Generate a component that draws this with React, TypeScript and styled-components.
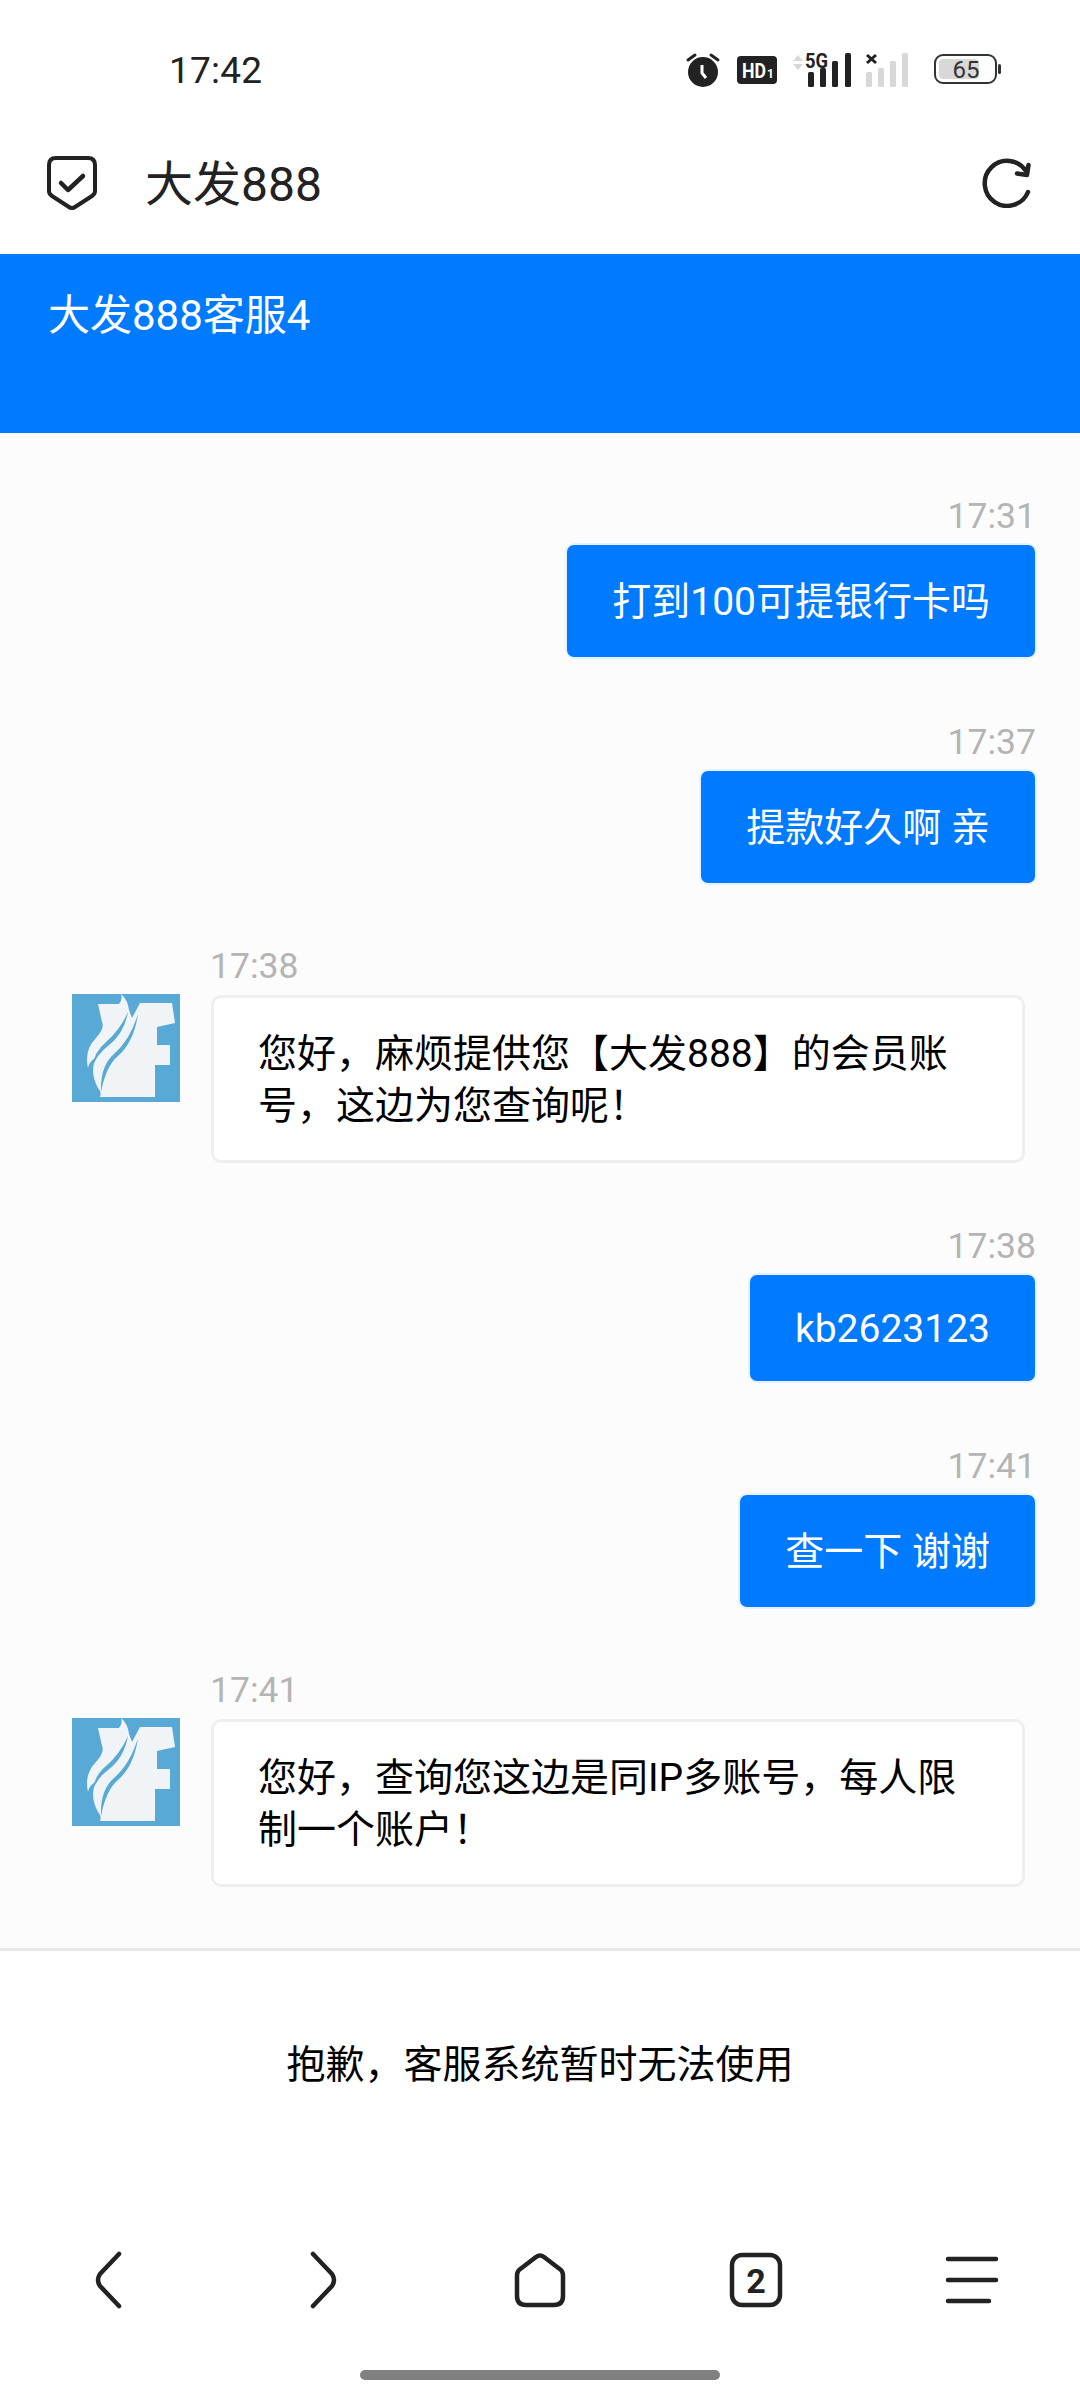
import React from "react";
import styled, { createGlobalStyle } from "styled-components";

const Global = createGlobalStyle`
  html, body { margin: 0; padding: 0; background: #fff; }
  * { box-sizing: border-box; }
  body { font-family: Roboto, "Noto Sans CJK SC", sans-serif; }
`;

const Page = styled.div`
  width: 1080px;
  height: 2400px;
  display: flex;
  flex-direction: column;
  overflow: hidden;
  background: #fff;
`;

const StatusBar = styled.div`
  height: 130px;
  flex: none;
  padding: 10px 78px 0 169px;
  display: flex;
  align-items: center;
  justify-content: space-between;
`;
const Clock = styled.div`
  font-size: 37px;
  color: #222;
  letter-spacing: 0.2px;
`;
const StatusIcons = styled.div`
  display: flex;
  align-items: center;
`;
const Icon = styled.svg<{ $ml?: number }>`
  display: block;
  flex: none;
  margin-left: ${(p) => p.$ml ?? 0}px;
`;

const Header = styled.div`
  height: 124px;
  flex: none;
  padding: 0 48px 18px 47px;
  display: flex;
  align-items: center;
`;
const Title = styled.div`
  flex: 1;
  margin: 0 0 6px 48px;
  font-size: 48px;
  color: #222;
`;

const Banner = styled.div`
  height: 179px;
  flex: none;
  background: #007aff;
  color: #fff;
  font-size: 42px;
  line-height: 50px;
  padding: 37px 48px 0;
`;

const Chat = styled.div`
  height: 1518px;
  flex: none;
  background: #fcfcfc;
  border-bottom: 3px solid #e8e8e8;
  padding-top: 60px;
  display: flex;
  flex-direction: column;
  gap: 60px;
`;

const RightBlock = styled.div`
  padding-right: 45px;
  display: flex;
  flex-direction: column;
  align-items: flex-end;
  & + & {
    margin-top: 2px;
  }
`;
const LeftBlock = styled.div`
  padding-left: 72px;
  display: flex;
  gap: 31px;
  align-items: flex-start;
`;
const LeftColumn = styled.div`
  display: flex;
  flex-direction: column;
  align-items: flex-start;
`;
const Avatar = styled.svg`
  display: block;
  flex: none;
  width: 108px;
  height: 108px;
  margin-top: 51px;
`;
const Time = styled.div`
  font-size: 35.5px;
  line-height: 44px;
  color: #b4b4b4;
  margin: 1px -1px 7px -1px;
`;
const RightBubble = styled.div<{ $line: number }>`
  background: #007aff;
  color: #fff;
  font-size: 39px;
  line-height: ${(p) => p.$line}px;
  padding: 30px 45px 28px;
  border-radius: 7px;
  box-shadow: 0 0 0 2px #e6f2ff;
  white-space: nowrap;
`;
const LeftBubble = styled.div`
  width: 814px;
  background: #fff;
  color: #000;
  font-size: 39px;
  line-height: 52px;
  padding: 30px 58px 28px 44px;
  border: 3px solid #efefef;
  border-radius: 10px;
`;

const Footer = styled.div`
  flex: none;
  height: 299px;
  padding-top: 88px;
  font-size: 39px;
  line-height: 52px;
  color: #000;
  text-align: center;
`;

const Nav = styled.div`
  flex: none;
  display: grid;
  grid-template-columns: repeat(5, 1fr);
  justify-items: center;
  height: 60px;
`;

const Indicator = styled.div`
  width: 360px;
  height: 10px;
  margin: 60px auto 0;
  border-radius: 5px;
  background: #808080;
`;

const DARK = "#222";
const PALE = "#d8d8d8";

const Alarm = () => (
  <Icon width="36" height="36" viewBox="0 0 36 36">
    <circle cx="18" cy="20" r="15" fill={DARK} />
    <path d="M3 8 L10 3 M33 8 L26 3" stroke={DARK} strokeWidth="3" strokeLinecap="round" />
    <path d="M17 13 L17 21 L21 26" stroke="#fff" strokeWidth="3" fill="none" />
  </Icon>
);
const Hd = () => (
  <Icon width="40" height="30" viewBox="0 0 40 30" $ml={16}>
    <rect width="40" height="28" y="1" rx="4" fill={DARK} />
    <text x="5" y="23" fontFamily="Roboto, sans-serif" fontWeight="700" fontSize="21" fill="#fff" textLength="24" lengthAdjust="spacingAndGlyphs">HD</text>
    <text x="30" y="23" fontFamily="Roboto, sans-serif" fontWeight="700" fontSize="12" fill="#fff">1</text>
  </Icon>
);
const Signal5g = () => (
  <Icon width="62" height="44" viewBox="0 -4 62 44" $ml={14}>
    <path d="M2 9 L7 3 L12 9 Z M2 12 L7 18 L12 12 Z" fill={PALE} />
    <text x="14" y="16" fontFamily="Roboto, sans-serif" fontWeight="700" fontSize="20" fill={DARK} textLength="23" lengthAdjust="spacingAndGlyphs">5G</text>
    <rect x="17" y="20" width="6" height="15" rx="1.5" fill={DARK} />
    <rect x="29" y="16" width="6" height="19" rx="1.5" fill={DARK} />
    <rect x="41" y="9" width="6" height="26" rx="1.5" fill={DARK} />
    <rect x="54" y="1" width="6" height="34" rx="1.5" fill={DARK} />
  </Icon>
);
const SignalX = () => (
  <Icon width="46" height="36" viewBox="0 0 46 36" $ml={12}>
    <path d="M2 3 L11 11 M11 3 L2 11" stroke={DARK} strokeWidth="3" />
    <rect x="1" y="20" width="6" height="15" rx="1.5" fill={PALE} />
    <rect x="13" y="16" width="6" height="19" rx="1.5" fill={PALE} />
    <rect x="25" y="9" width="6" height="26" rx="1.5" fill={PALE} />
    <rect x="37" y="1" width="6" height="34" rx="1.5" fill={PALE} />
  </Icon>
);
const Battery = () => (
  <Icon width="68" height="32" viewBox="0 0 68 32" $ml={23}>
    <rect x="1" y="1" width="61" height="28" rx="8" fill="#fff" stroke="#333" strokeWidth="2" />
    <rect x="5" y="5" width="40" height="20" rx="4" fill={PALE} />
    <text x="32" y="24" textAnchor="middle" fontFamily="Roboto, sans-serif" fontSize="24" fill="#333">65</text>
    <rect x="64" y="10" width="3" height="10" rx="1.5" fill="#333" />
  </Icon>
);

const Shield = () => (
  <Icon width="50" height="54" viewBox="0 0 50 54">
    <path d="M9 2 H41 Q48 2 48 9 V35 Q48 38 45 40 L28 51 Q25 53 22 51 L5 40 Q2 38 2 35 V9 Q2 2 9 2 Z" fill="none" stroke={DARK} strokeWidth="4" />
    <path d="M14 27 L21 34 L36 20" fill="none" stroke={DARK} strokeWidth="4.5" strokeLinecap="round" strokeLinejoin="round" />
  </Icon>
);
const Refresh = () => (
  <Icon width="50" height="50" viewBox="0 0 50 50">
    <path d="M46 34 A22.5 22.5 0 1 1 44 13" fill="none" stroke={DARK} strokeWidth="4.5" strokeLinecap="round" />
    <path d="M46.5 7 L45 17 L35 15.5" fill="none" stroke={DARK} strokeWidth="4.5" strokeLinecap="round" strokeLinejoin="round" />
  </Icon>
);

const LOGO_BLUE = "#58a9d6";
const Logo = () => (
  <Avatar viewBox="0 0 108 108">
    <rect width="108" height="108" fill={LOGO_BLUE} />
    {/* white silhouette of the mark */}
    <path
      d="M26 10 H47 Q51 5 49 0 Q56 6 57 16 L60 24 L68 9 H100 L103 29 L85 33 V51 H98 V71 H83 V103 H28 Q30 98 26 94 Q18 80 23 64 Q17 68 16 74 Q12 56 24 44 Q33 34 30 28 Z"
      fill="#f1f4f6"
    />
    {/* blue slits that separate the flames from the J */}
    <path d="M56 18 Q52 40 36 52 Q25 60 20 74 Q22 58 34 48 Q48 36 56 18 Z" fill={LOGO_BLUE} />
    <path d="M66 20 Q62 48 46 62 Q34 72 29 98 Q28 72 42 60 Q58 46 66 20 Z" fill={LOGO_BLUE} />
  </Avatar>
);

const NavIcon = styled.svg`
  display: block;
  width: 60px;
  height: 60px;
`;
const navStroke = { fill: "none", stroke: DARK, strokeWidth: 4.5, strokeLinecap: "round" as const, strokeLinejoin: "round" as const };

export default function App() {
  return (
    <Page>
      <Global />
      <StatusBar>
        <Clock>17:42</Clock>
        <StatusIcons>
          <Alarm />
          <Hd />
          <Signal5g />
          <SignalX />
          <Battery />
        </StatusIcons>
      </StatusBar>
      <Header>
        <Shield />
        <Title>大发888</Title>
        <Refresh />
      </Header>
      <Banner>大发888客服4</Banner>
      <Chat>
        <RightBlock>
          <Time>17:31</Time>
          <RightBubble $line={54}>打到100可提银行卡吗</RightBubble>
        </RightBlock>
        <RightBlock>
          <Time>17:37</Time>
          <RightBubble $line={54}>提款好久啊 亲</RightBubble>
        </RightBlock>
        <LeftBlock>
          <Logo />
          <LeftColumn>
            <Time>17:38</Time>
            <LeftBubble>您好，麻烦提供您【大发888】的会员账号，这边为您查询呢！</LeftBubble>
          </LeftColumn>
        </LeftBlock>
        <RightBlock>
          <Time>17:38</Time>
          <RightBubble $line={48}>kb2623123</RightBubble>
        </RightBlock>
        <RightBlock>
          <Time>17:41</Time>
          <RightBubble $line={54}>查一下 谢谢</RightBubble>
        </RightBlock>
        <LeftBlock>
          <Logo />
          <LeftColumn>
            <Time>17:41</Time>
            <LeftBubble>您好，查询您这边是同IP多账号，每人限制一个账户！</LeftBubble>
          </LeftColumn>
        </LeftBlock>
      </Chat>
      <Footer>抱歉，客服系统暂时无法使用</Footer>
      <Nav>
        <NavIcon viewBox="0 0 60 60">
          <path d="M41 4 L22 24 Q18 30 22 36 L41 56" {...navStroke} />
        </NavIcon>
        <NavIcon viewBox="0 0 60 60">
          <path d="M19 4 L38 24 Q42 30 38 36 L19 56" {...navStroke} />
        </NavIcon>
        <NavIcon viewBox="0 0 60 60">
          <path d="M9 20 L26 7 Q30 4 34 7 L51 20 Q53 22 53 26 V46 Q53 55 44 55 H16 Q7 55 7 46 V26 Q7 22 9 20 Z" {...navStroke} />
        </NavIcon>
        <NavIcon viewBox="0 0 60 60">
          <rect x="6" y="5" width="48" height="50" rx="10" {...navStroke} />
          <text x="30" y="43" textAnchor="middle" fontFamily="Roboto, sans-serif" fontWeight="700" fontSize="34" fill={DARK}>2</text>
        </NavIcon>
        <NavIcon viewBox="0 0 60 60">
          <path d="M6 9 H54 M6 30 H54 M6 51 H47" {...navStroke} />
        </NavIcon>
      </Nav>
      <Indicator />
    </Page>
  );
}
